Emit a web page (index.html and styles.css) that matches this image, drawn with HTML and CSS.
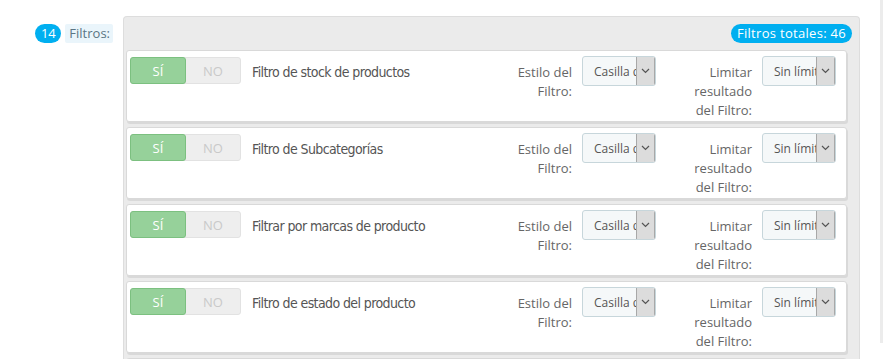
FILE: index.html
```html
<!DOCTYPE html>
<html lang="es">
<head>
    <meta charset="UTF-8">
    <title>Filtros</title>
    <link rel="stylesheet" href="styles.css">
</head>
<body>
<div class="page">
    <div class="side">
        <span class="badge">14</span>
        <span class="side-label">Filtros:</span>
    </div>
    <div class="panel">
        <div class="panel-head"><span class="total">Filtros totales: 46</span></div>

        <div class="item">
            <div class="toggle"><span class="yes">SÍ</span><span class="no">NO</span></div>
            <div class="name">Filtro de stock de productos</div>
            <div class="lbl lbl-style">Estilo del Filtro:</div>
            <div class="select"><span class="val">Casilla de verificación</span><span class="arrow"><svg width="9" height="6" viewBox="0 0 9 6"><path d="M1 1l3.5 3.5L8 1" fill="none" stroke="#555" stroke-width="1.2"/></svg></span></div>
            <div class="lbl lbl-limit">Limitar resultado del Filtro:</div>
            <div class="select"><span class="val">Sin límite</span><span class="arrow"><svg width="9" height="6" viewBox="0 0 9 6"><path d="M1 1l3.5 3.5L8 1" fill="none" stroke="#555" stroke-width="1.2"/></svg></span></div>
        </div>

        <div class="item">
            <div class="toggle"><span class="yes">SÍ</span><span class="no">NO</span></div>
            <div class="name">Filtro de Subcategorías</div>
            <div class="lbl lbl-style">Estilo del Filtro:</div>
            <div class="select"><span class="val">Casilla de verificación</span><span class="arrow"><svg width="9" height="6" viewBox="0 0 9 6"><path d="M1 1l3.5 3.5L8 1" fill="none" stroke="#555" stroke-width="1.2"/></svg></span></div>
            <div class="lbl lbl-limit">Limitar resultado del Filtro:</div>
            <div class="select"><span class="val">Sin límite</span><span class="arrow"><svg width="9" height="6" viewBox="0 0 9 6"><path d="M1 1l3.5 3.5L8 1" fill="none" stroke="#555" stroke-width="1.2"/></svg></span></div>
        </div>

        <div class="item">
            <div class="toggle"><span class="yes">SÍ</span><span class="no">NO</span></div>
            <div class="name">Filtrar por marcas de producto</div>
            <div class="lbl lbl-style">Estilo del Filtro:</div>
            <div class="select"><span class="val">Casilla de verificación</span><span class="arrow"><svg width="9" height="6" viewBox="0 0 9 6"><path d="M1 1l3.5 3.5L8 1" fill="none" stroke="#555" stroke-width="1.2"/></svg></span></div>
            <div class="lbl lbl-limit">Limitar resultado del Filtro:</div>
            <div class="select"><span class="val">Sin límite</span><span class="arrow"><svg width="9" height="6" viewBox="0 0 9 6"><path d="M1 1l3.5 3.5L8 1" fill="none" stroke="#555" stroke-width="1.2"/></svg></span></div>
        </div>

        <div class="item">
            <div class="toggle"><span class="yes">SÍ</span><span class="no">NO</span></div>
            <div class="name">Filtro de estado del producto</div>
            <div class="lbl lbl-style">Estilo del Filtro:</div>
            <div class="select"><span class="val">Casilla de verificación</span><span class="arrow"><svg width="9" height="6" viewBox="0 0 9 6"><path d="M1 1l3.5 3.5L8 1" fill="none" stroke="#555" stroke-width="1.2"/></svg></span></div>
            <div class="lbl lbl-limit">Limitar resultado del Filtro:</div>
            <div class="select"><span class="val">Sin límite</span><span class="arrow"><svg width="9" height="6" viewBox="0 0 9 6"><path d="M1 1l3.5 3.5L8 1" fill="none" stroke="#555" stroke-width="1.2"/></svg></span></div>
        </div>

        <div class="item">
            <div class="toggle"><span class="yes">SÍ</span><span class="no">NO</span></div>
            <div class="name">Filtro de disponibilidad</div>
            <div class="lbl lbl-style">Estilo del Filtro:</div>
            <div class="select"><span class="val">Casilla de verificación</span><span class="arrow"><svg width="9" height="6" viewBox="0 0 9 6"><path d="M1 1l3.5 3.5L8 1" fill="none" stroke="#555" stroke-width="1.2"/></svg></span></div>
            <div class="lbl lbl-limit">Limitar resultado del Filtro:</div>
            <div class="select"><span class="val">Sin límite</span><span class="arrow"><svg width="9" height="6" viewBox="0 0 9 6"><path d="M1 1l3.5 3.5L8 1" fill="none" stroke="#555" stroke-width="1.2"/></svg></span></div>
        </div>
    </div>
    <div class="edge"></div>
</div>
</body>
</html>
```

FILE: styles.css
```css
html,body{margin:0;padding:0;background:#fff;}
body{font-family:"Open Sans","Noto Sans",sans-serif;font-size:13px;color:#555;height:359px;overflow:hidden;}
.page{display:flex;align-items:flex-start;padding-top:16px;}

/* columna izquierda */
.side{width:123px;box-sizing:border-box;display:flex;justify-content:flex-end;gap:4px;padding:8px 10px 0 0;}
.badge{display:inline-block;width:26px;height:19px;line-height:19px;text-align:center;border-radius:10px;background:#00aff0;color:#fff;font-size:13px;}
.side-label{display:inline-block;height:19px;line-height:19px;padding:0 3px 0 4px;background:#eaf5fb;color:#5b7584;border-radius:2px;}

/* panel */
.panel{width:737px;box-sizing:border-box;background:#ebebeb;border:1px solid #dddddd;border-bottom:0;border-radius:4px 4px 0 0;padding:7px 7px 0 2px;}
.panel-head{display:flex;justify-content:flex-end;height:19px;margin-bottom:7px;}
.total{display:inline-block;height:19px;line-height:19px;padding:0 6px;border-radius:10px;background:#00aff0;color:#fff;font-size:13px;letter-spacing:.3px;}

.item{display:flex;align-items:flex-start;height:72px;box-sizing:border-box;margin:0 5px 5px 0;padding:5px 10px 0 3px;background:#fff;border:1px solid #d9d9d9;border-radius:3px;box-shadow:1px 2px 0 #d9d9d9;}

.toggle{display:flex;width:111px;height:27px;margin-top:1px;box-sizing:border-box;border-radius:3px;background:#eee;border:1px solid #e2e2e2;}
.toggle span{display:flex;align-items:center;justify-content:center;font-size:13px;}
.toggle .yes{width:54px;margin:-1px 0 -1px -1px;background:#96d19a;border:1px solid #7cc080;border-radius:3px;color:#fff;}
.toggle .no{flex:1;color:#c9c9c9;}

.name{width:253px;margin-left:11px;padding-top:6px;line-height:20px;font-family:"DejaVu Sans Condensed","DejaVu Sans",sans-serif;font-size:14px;letter-spacing:-.6px;color:#555;}

.lbl{text-align:right;line-height:19px;padding-top:7px;color:#666;}
.lbl-style{width:67px;}
.lbl-limit{width:62px;margin-left:34px;}

.select{display:flex;width:74px;height:30px;margin-left:10px;box-sizing:border-box;border:1px solid #c7d6db;border-radius:3px;background:#f5f8f9;overflow:hidden;}
.select .val{flex:1;overflow:hidden;white-space:nowrap;padding:3px 0 0 11px;line-height:24px;font-size:12px;color:#555;}
.select .arrow{width:17px;display:flex;align-items:center;justify-content:center;background:#dcdcdc;border-left:1px solid #a8a8a8;border-right:1px solid #a8a8a8;}

.edge{width:3px;height:343px;margin-left:20px;margin-top:-16px;background:#ececec;}
```
